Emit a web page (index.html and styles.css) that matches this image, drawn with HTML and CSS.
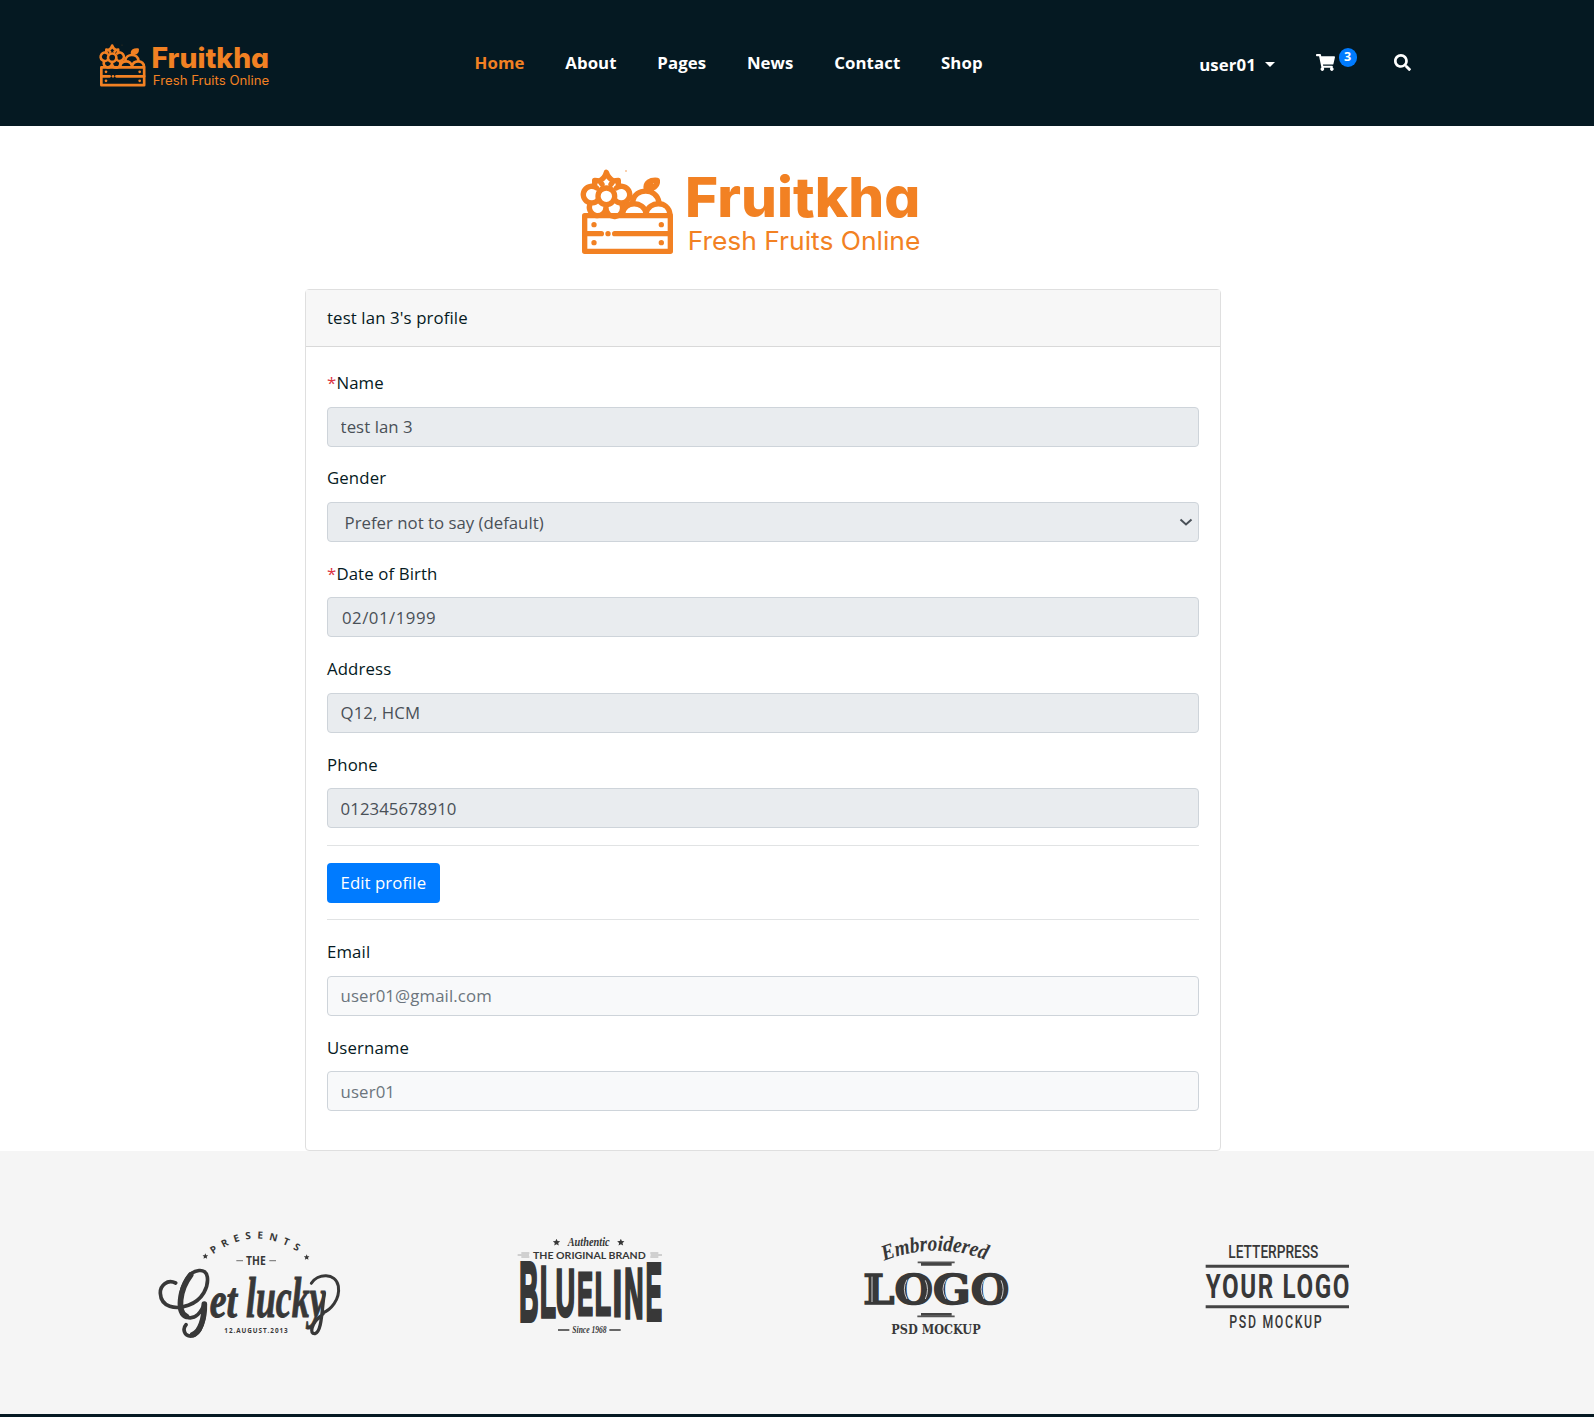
FILE: index.html
```html
<!DOCTYPE html>
<html lang="en">
<head>
<meta charset="utf-8">
<title>Fruitkha - Profile</title>
<link rel="stylesheet" href="styles.css">
</head>
<body>
<svg class="defs" width="0" height="0" aria-hidden="true">
  <symbol id="crate" viewBox="0 0 1140 360">
    <g fill="none" stroke="#f28123" stroke-width="16" stroke-linejoin="round" stroke-linecap="round">
      <rect x="72" y="196" width="257" height="107"/>
      <path d="M72 250H122M162 250H329"/>
      <circle cx="137" cy="138" r="25"/>
      <path d="M112 149A25 25 0 1 1 108 113M163 149A25 25 0 1 0 167 113"/>
      <path d="M87 164A25 25 0 1 0 136 172A25 25 0 1 0 184 164"/>
      <path d="M102 108V90L117 92Q133 82 137 66Q142 82 158 92L173 90V108M117 92L124 102M158 92L151 102"/>
      <path d="M185 192C190 150 250 150 256 190C264 150 324 150 328 192"/>
      <path d="M216 153C222 113 288 110 295 156M257 118C252 95 270 88 290 90C292 108 276 117 257 118L271 103"/>
    </g>
    <g fill="#f28123">
      <circle cx="142" cy="250" r="8"/><circle cx="100" cy="223" r="8"/><circle cx="302" cy="223" r="8"/><circle cx="100" cy="277" r="8"/><circle cx="302" cy="277" r="8"/><circle cx="196" cy="62" r="2"/>
    </g>
  </symbol>
  <symbol id="star" viewBox="0 0 24 24"><path d="M12 1l3.300 7.500 8.200.8-6.200 5.400 1.900 8.100L12 18.500l-7.200 4.300 1.900-8.100L.5 9.300l8.200-.8z"/></symbol>
</svg>

<header class="header">
  <svg class="header-logo" viewBox="58 50 1026 268">
    <use href="#crate" width="1140" height="360"/>
    <text class="logo-name" x="373" y="200" textLength="706" lengthAdjust="spacingAndGlyphs">Fruitkha</text>
    <text class="logo-tag" x="381" y="300" textLength="698" lengthAdjust="spacingAndGlyphs">Fresh Fruits Online</text>
  </svg>
  <nav class="menu">
    <a class="active">Home</a><a>About</a><a>Pages</a><a>News</a><a>Contact</a><a>Shop</a>
  </nav>
  <div class="tools">
    <a class="user">user01<span class="caret"></span></a>
    <a class="cart">
      <svg width="19" height="17" viewBox="0 0 576 512" fill="#fff"><path d="M528.12 301.319l47.273-208C578.806 78.301 567.391 64 551.99 64H159.208l-9.166-44.81C147.758 8.021 137.93 0 126.529 0H24C10.745 0 0 10.745 0 24v16c0 13.255 10.745 24 24 24h69.883l70.248 343.435C147.325 417.1 136 435.222 136 456c0 30.928 25.072 56 56 56s56-25.072 56-56c0-15.674-6.447-29.835-16.824-40h209.647C430.447 426.165 424 440.326 424 456c0 30.928 25.072 56 56 56s56-25.072 56-56c0-22.172-12.888-41.332-31.579-50.405l5.517-24.276c3.413-15.018-8.002-29.319-23.403-29.319H218.117l-6.545-32h293.145c11.206 0 20.92-7.754 23.403-18.681z"/></svg>
      <span class="badge">3</span>
    </a>
    <svg width="17" height="17" viewBox="0 0 512 512" fill="#fff"><path d="M505 442.7L405.3 343c-4.5-4.5-10.6-7-17-7H372c27.6-35.3 44-79.7 44-128C416 93.1 322.9 0 208 0S0 93.1 0 208s93.1 208 208 208c48.3 0 92.7-16.4 128-44v16.3c0 6.4 2.5 12.5 7 17l99.7 99.7c9.4 9.4 24.6 9.4 33.9 0l28.3-28.3c9.4-9.4 9.4-24.6.1-34zM208 336c-70.7 0-128-57.2-128-128 0-70.7 57.2-128 128-128 70.7 0 128 57.2 128 128 0 70.7-57.2 128-128 128z"/></svg>
  </div>
</header>

<main class="main">
  <svg class="main-logo" viewBox="58 50 1026 268">
    <use href="#crate" width="1140" height="360"/>
    <text class="logo-name" x="373" y="200" textLength="706" lengthAdjust="spacingAndGlyphs">Fruitkha</text>
    <text class="logo-tag" x="381" y="300" textLength="698" lengthAdjust="spacingAndGlyphs">Fresh Fruits Online</text>
  </svg>
  <section class="card">
    <div class="card-header">test lan 3's profile</div>
    <form class="card-body">
      <div class="group"><label><span class="req">*</span>Name</label><input class="control" disabled value="test lan 3"></div>
      <div class="group"><label>Gender</label>
        <div class="select"><select class="control" disabled><option>Prefer not to say (default)</option></select>
        <svg width="14" height="9" viewBox="0 0 14 9" fill="none" stroke="#495057" stroke-width="2"><path d="M1.500 1.500L7 6.500l5.500-5"/></svg></div>
      </div>
      <div class="group"><label><span class="req">*</span>Date of Birth</label><input class="control date" disabled value="02/01/1999"></div>
      <div class="group"><label>Address</label><input class="control" disabled value="Q12, HCM"></div>
      <div class="group"><label>Phone</label><input class="control" disabled value="012345678910"></div>
      <hr>
      <button class="btn" type="button">Edit profile</button>
      <hr>
      <div class="group"><label>Email</label><input class="control light" disabled value="user01@gmail.com"></div>
      <div class="group"><label>Username</label><input class="control light" disabled value="user01"></div>
    </form>
  </section>
</main>

<section class="brands">
  <div class="brand">
    <svg width="220" height="150" viewBox="0 0 660 450">
      <path id="arc" d="M219 133Q348 39 486 133" fill="none"/>
      <text class="sans" font-size="30" font-weight="700"><textPath href="#arc" textLength="272">PRESENTS</textPath></text>
      <use href="#star" x="187" y="129" width="18" height="18"/><use href="#star" x="491" y="132" width="18" height="18"/>
      <path d="M289 152h20M388 152h20" stroke="#888" stroke-width="4"/>
      <text class="sans" x="318" y="164" font-size="37" font-weight="700" textLength="59" lengthAdjust="spacingAndGlyphs">THE</text>
      <g fill="none" stroke="#383838" stroke-linecap="round">
        <path d="M107 219C82 207 60 226 61 250C63 291 106 300 145 286C189 270 206 230 202 201C198 172 160 177 141 205C117 241 111 307 139 321C165 332 187 304 193 279C197 326 183 375 155 378C132 380 127 356 138 344" stroke-width="11"/>
        <path d="M152 195C117 241 111 307 139 319M193 282C194 326 180 368 158 374" stroke-width="17"/>
        <path d="M514 220C532 190 587 187 595 228C601 270 571 300 548 309" stroke-width="9"/>
        <path d="M553 250C545 300 546 365 525 371C508 373 511 341 549 312" stroke-width="10"/>
      </g>
      <text class="script heavy" x="209" y="322" font-size="150" textLength="82" lengthAdjust="spacingAndGlyphs">et</text>
      <text class="script heavy" x="318" y="322" font-size="172" textLength="238" lengthAdjust="spacingAndGlyphs">lucky</text>
      <text class="sans" x="253" y="369" font-size="19" font-weight="700" textLength="190">12.AUGUST.2013</text>
    </svg>
  </div>
  <div class="brand">
    <svg width="220" height="150" viewBox="-54 0 660 450">
      <use href="#star" x="158" y="85" width="23" height="23"/><use href="#star" x="351" y="85" width="23" height="23"/>
      <text class="script" x="203" y="107" font-size="36" textLength="126" lengthAdjust="spacingAndGlyphs">Authentic</text>
      <path d="M53 135h34M64 129h24M64 141h24M452 135h34M451 129h24M451 141h24" stroke="#aaa" stroke-width="3"/>
      <text class="lato" x="99" y="146" font-size="29" font-weight="700" textLength="338" lengthAdjust="spacingAndGlyphs">THE ORIGINAL BRAND</text>
      <g class="blue">
        <text transform="translate(57.600 332) scale(.8 2.500)">B</text>
        <text transform="translate(119.800 322) scale(.78 2.180)">L</text>
        <text transform="translate(167 318) scale(.8 2)">U</text>
        <text transform="translate(232 314) scale(.71 1.840)">E</text>
        <text transform="translate(284.600 314) scale(.8 1.860)">L</text>
        <text transform="translate(338.500 317) scale(1 1.940)">I</text>
        <text transform="translate(372.600 323) scale(.8 2.120)">N</text>
        <text transform="translate(437 331) scale(.73 2.430)">E</text>
      </g>
      <path d="M174 360h34M328 360h34" stroke="#383838" stroke-width="4"/>
      <text class="script" x="217" y="370" font-size="28" textLength="103" lengthAdjust="spacingAndGlyphs">Since 1968</text>
    </svg>
  </div>
  <div class="brand">
    <svg width="220" height="150" viewBox="-78 0 660 450">
      <path id="arch" d="M102 153Q258 92 410 151" fill="none"/>
      <text class="script" font-size="66"><textPath href="#arch" textLength="312" lengthAdjust="spacingAndGlyphs">Embroidered</textPath></text>
      <path d="M203 157h111M202 319h112" stroke="#555" stroke-width="5"/>
      <path d="M213 163h92M213 313h92" stroke="#444" stroke-width="8"/>
      <text class="slab big" x="40" y="282" font-size="124" textLength="438" lengthAdjust="spacingAndGlyphs">LOGO</text>
      <path d="M66 200v76M171 209Q155 237 171 267M288 209Q270 237 288 267M402 209Q385 237 402 267M226 211Q239 238 226 267M453 211Q466 238 453 267" fill="none" stroke="#ccc" stroke-width="3"/>
      <text class="slab" x="124" y="373" font-size="36" textLength="268" lengthAdjust="spacingAndGlyphs">PSD MOCKUP</text>
    </svg>
  </div>
  <div class="brand">
    <svg width="220" height="150" viewBox="-72 -30 660 450">
      <text class="narrow" transform="translate(115 113) scale(.7 1)" font-size="53" textLength="386" lengthAdjust="spacingAndGlyphs">LETTERPRESS</text>
      <path d="M47 139h430M47 260h430" stroke="#444" stroke-width="9"/>
      <text class="narrow bold" transform="translate(47 235) scale(.74 1)" font-size="98" textLength="583">YOUR LOGO</text>
      <text class="narrow" transform="translate(118 324) scale(.7 1)" font-size="53" textLength="396">PSD MOCKUP</text>
    </svg>
  </div>
</section>
<footer class="footer"></footer>
</body>
</html>
```
FILE: styles.css
```css
* { box-sizing: border-box; }
body {
  margin: 0;
  height: 1417px;
  overflow: hidden;
  background: #fff;
  color: #051922;
  font: 16.8px/30.24px "Open Sans", sans-serif;
}
.defs { position: absolute; }
.header {
  display: flex;
  height: 126px;
  background: #051922;
  color: #fff;
  font-weight: 700;
}
.header-logo { width: 171px; height: 44.670px; margin: 42.5px 0 0 99.300px; flex: none; }
.menu { display: flex; gap: 40.7px; width: 724px; margin: 48px 0 0 204.300px; flex: none; letter-spacing: .09px; }
.menu .active { color: #f28123; }
.tools { display: flex; align-items: flex-start; padding-top: 54px; }
.tools > svg { margin-left: 37px; }
.user { display: flex; align-items: center; width: 116.500px; margin: -4px 0 0 .6px; flex: none; letter-spacing: .09px; }
.caret { margin: -1px 0 0 9px; border: 5px solid transparent; border-top-color: #fff; border-bottom: 0; }
.cart { display: flex; gap: 4px; }
.badge {
  width: 18px;
  height: 19px;
  margin-top: -6px;
  border-radius: 10px;
  background: #007bff;
  font-size: 12.6px;
  line-height: 18px;
  text-align: center;
}
.logo-name, .logo-tag { fill: #f28123; font-family: Inter, sans-serif; font-feature-settings: "cv11"; }
.logo-name { font-size: 167px; font-weight: 800; }
.logo-tag { font-size: 76px; font-weight: 400; }

.main { height: 1025px; padding: 41.300px 0 0 305px; }
.main-logo { display: block; width: 342px; height: 89.330px; margin: 0 0 32.700px 275px; }
.card { width: 916px; height: 861.500px; border: 1px solid #dfdfdf; border-radius: 4px; }
.card-header { padding: 12.8px 21px; background: #f7f7f7; border-bottom: 1px solid #d9d9d9; letter-spacing: .12px; }
.card-body { padding: 21px; }
.group { margin-bottom: 16.8px; }
label { display: block; margin-bottom: 8.4px; letter-spacing: .12px; }
.req { color: #dc3545; }
.control {
  display: block;
  width: 100%;
  height: 39.9px;
  padding: 6.3px 12.6px;
  border: 1px solid #ced4da;
  border-radius: 4px;
  background: #e9ecef;
  color: #495057;
  font: inherit;
  line-height: 25px;
  letter-spacing: .06px;
  opacity: 1;
  appearance: none;
}
.date { height: 40.1px; padding-left: 14px; letter-spacing: .5px; }
.light { background: #f8f9fa; color: #6c757d; letter-spacing: .12px; }
.select { display: grid; align-items: center; }
.select > * { grid-area: 1 / 1; }
.select .control { padding-left: 16.6px; letter-spacing: 0; }
.select svg { justify-self: end; margin-right: 6px; pointer-events: none; }
hr { height: 1px; margin: 16.8px 0; border: 0; background: #e1e3e4; }
.btn {
  display: block;
  height: 39.9px;
  padding: 1px 13.600px 0;
  border: 0;
  border-radius: 4px;
  background: #007bff;
  color: #fff;
  font: inherit;
  letter-spacing: .05px;
}

.brands { display: flex; height: 263px; padding: 59px 79px 0; background: #f5f5f5; }
.brand { width: 342px; flex: none; text-align: center; }
.brand svg { fill: #383838; }
.sans { font-family: "Open Sans", sans-serif; }
.lato { font-family: Lato, sans-serif; }
.script { font-family: "Liberation Serif", serif; font-style: italic; font-weight: 700; }
.heavy { stroke: #383838; stroke-width: 3px; }
.blue { font: 700 100px "Liberation Sans", sans-serif; stroke: #383838; stroke-width: 5px; }
.slab { font-family: "DejaVu Serif", serif; font-weight: 700; }
.big { stroke: #383838; stroke-width: 5px; }
.narrow { font-family: Roboto, sans-serif; font-weight: 500; }
.narrow.bold { font-weight: 700; }
.footer { height: 3px; background: #051922; }
```
